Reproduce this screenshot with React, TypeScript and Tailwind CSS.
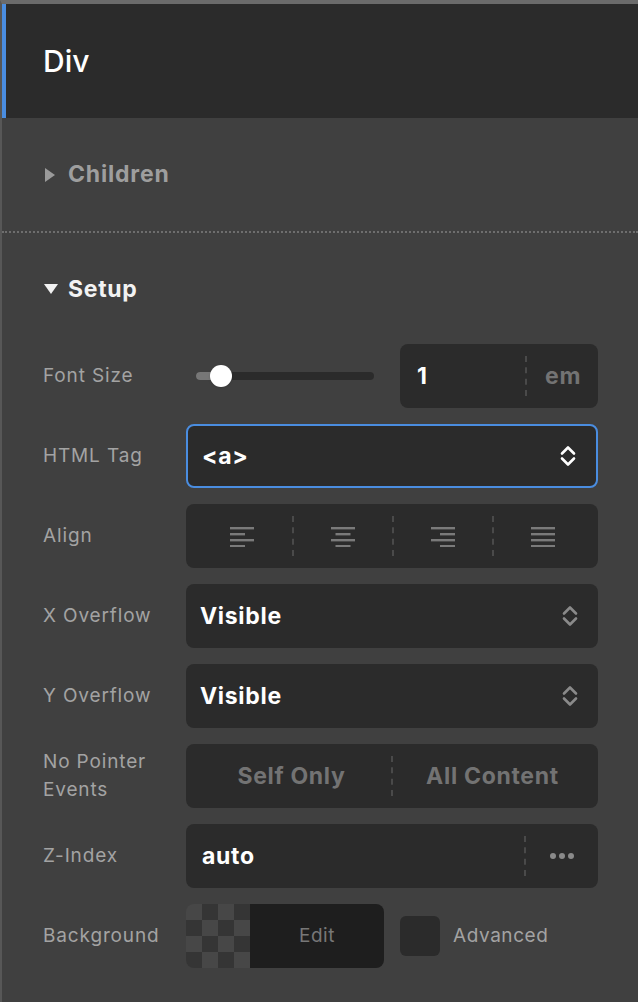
import type { ReactNode } from 'react'

const font = { fontFamily: 'Inter, "Noto Sans", sans-serif' }

function Chevrons({ color }: { color: string }) {
  return (
    <svg width="18" height="22" viewBox="0 0 18 22" fill="none" stroke={color} strokeWidth="2.6" strokeLinecap="round" strokeLinejoin="round">
      <path d="M3 8.5 L9 2.5 L15 8.5" />
      <path d="M3 13.5 L9 19.5 L15 13.5" />
    </svg>
  )
}

function AlignIcon({ kind }: { kind: 'left' | 'center' | 'right' | 'justify' }) {
  const short = kind === 'justify' ? 24 : 15
  const x = kind === 'left' || kind === 'justify' ? 0 : kind === 'center' ? 4.5 : 9
  return (
    <svg width="24" height="22" viewBox="0 0 24 22" fill="#7a7a7a">
      <rect x="0" y="2" width="24" height="2.4" />
      <rect x={x} y="8" width={short} height="2.4" />
      <rect x="0" y="14" width="24" height="2.4" />
      <rect x={x} y="20" width={short} height="2.4" />
    </svg>
  )
}

function VDash({ h = 'h-10' }: { h?: string }) {
  return <div className={`${h} border-l-2 border-dashed border-[#4a4a4a]`} />
}

function Row({ label, children }: { label: ReactNode; children: ReactNode }) {
  return (
    <div className="flex h-16 items-center">
      <div className="w-[143px] shrink-0 text-[19px] leading-[28px] tracking-[0.045em] text-[#a3a3a3]">{label}</div>
      <div className="flex h-full flex-1 items-center">{children}</div>
    </div>
  )
}

function Select({ value, focused }: { value: string; focused?: boolean }) {
  return (
    <div
      className={`flex h-full w-full items-center justify-between rounded-lg bg-[#2b2b2b] pl-[14px] pr-[19px] ${
        focused ? 'border-2 border-[#4a8de0]' : ''
      }`}
    >
      <span className="text-[23px] font-bold tracking-[0.03em] text-white">{value}</span>
      <Chevrons color={focused ? '#ffffff' : '#8a8a8a'} />
    </div>
  )
}

export default function App() {
  const checker = Array.from({ length: 16 }, (_, i) => ((Math.floor(i / 4) + i) % 2 === 0 ? 'bg-[#474747]' : 'bg-[#353535]'))

  return (
    <div className="min-h-[1002px] w-[638px] border-t-4 border-l-2 border-t-[#6b6b6b] border-l-[#575757] bg-[#404040]" style={font}>
      {/* header */}
      <div className="flex h-[114px] items-center border-l-4 border-[#4a8de0] bg-[#2b2b2b] pl-[37px]">
        <span className="text-[30px] font-medium text-white">Div</span>
      </div>

      {/* Children */}
      <div className="flex h-[113px] items-center gap-[13px] pl-[43px]">
        <svg width="10" height="14" viewBox="0 0 10 14" fill="#9a9a9a">
          <path d="M0 0 L10 7 L0 14 Z" />
        </svg>
        <span className="text-[23px] font-bold tracking-[0.035em] text-[#9e9e9e]">Children</span>
      </div>
      <div className="border-t-2 border-dotted border-[#6e6e6e]" />

      {/* Setup */}
      <div className="pl-[41px] pr-10 pt-[42px]">
        <div className="flex h-7 items-center gap-[10px] pl-[1px]">
          <svg width="14" height="10" viewBox="0 0 14 10" fill="#f2f2f2">
            <path d="M0 0 L14 0 L7 10 Z" />
          </svg>
          <span className="text-[23px] font-bold tracking-[0.03em] text-[#f2f2f2]">Setup</span>
        </div>

        <div className="mt-[41px] flex flex-col gap-4">
          <Row label="Font Size">
            <div className="relative flex h-full w-[214px] items-center pl-[10px] pr-[26px]">
              <div className="relative h-2 w-full rounded-sm bg-[#2b2b2b]">
                <div className="h-full w-[22px] rounded-l-sm bg-[#777777]" />
                <div className="absolute left-[14px] top-1/2 h-[22px] w-[22px] -translate-y-1/2 rounded-full bg-white shadow" />
              </div>
            </div>
            <div className="flex h-full flex-1 items-center rounded-lg bg-[#2b2b2b]">
              <span className="w-[125px] pl-[17px] text-[23px] font-bold text-white">1</span>
              <VDash />
              <span className="flex-1 pl-[18px] text-[23px] font-bold tracking-[0.03em] text-[#737373]">em</span>
            </div>
          </Row>

          <Row label="HTML Tag">
            <Select value="<a>" focused />
          </Row>

          <Row label="Align">
            <div className="flex h-full w-full items-center rounded-lg bg-[#2b2b2b] px-[6px]">
              {(['left', 'center', 'right', 'justify'] as const).map((k, i) => (
                <div key={k} className="flex h-full flex-1 items-center">
                  {i > 0 && <VDash />}
                  <div className="flex flex-1 justify-center">
                    <AlignIcon kind={k} />
                  </div>
                </div>
              ))}
            </div>
          </Row>

          <Row label="X Overflow">
            <Select value="Visible" />
          </Row>

          <Row label="Y Overflow">
            <Select value="Visible" />
          </Row>

          <Row
            label={
              <>
                No Pointer
                <br />
                Events
              </>
            }
          >
            <div className="flex h-full w-full items-center rounded-lg bg-[#2b2b2b] px-[6px]">
              <div className="flex flex-1 justify-center text-[23px] font-bold tracking-[0.03em] text-[#737373]">Self Only</div>
              <VDash />
              <div className="flex flex-1 justify-center text-[23px] font-bold tracking-[0.03em] text-[#737373]">All Content</div>
            </div>
          </Row>

          <Row label="Z-Index">
            <div className="flex h-full w-full items-center rounded-lg bg-[#2b2b2b]">
              <span className="w-[338px] pl-[16px] text-[23px] font-bold tracking-[0.03em] text-white">auto</span>
              <VDash />
              <div className="flex flex-1 justify-center gap-[3px]">
                <span className="h-[6px] w-[6px] rounded-full bg-[#8a8a8a]" />
                <span className="h-[6px] w-[6px] rounded-full bg-[#8a8a8a]" />
                <span className="h-[6px] w-[6px] rounded-full bg-[#8a8a8a]" />
              </div>
            </div>
          </Row>

          <Row label="Background">
            <div className="flex h-full w-[198px] overflow-hidden rounded-lg">
              <div className="grid h-16 w-16 shrink-0 grid-cols-4">
                {checker.map((c, i) => (
                  <div key={i} className={c} />
                ))}
              </div>
              <div className="flex flex-1 items-center justify-center bg-[#1e1e1e] text-[19px] tracking-[0.03em] text-[#777777]">Edit</div>
            </div>
            <div className="ml-4 h-10 w-10 rounded-md bg-[#2b2b2b]" />
            <span className="ml-[13px] text-[19px] tracking-[0.03em] text-[#a3a3a3]">Advanced</span>
          </Row>
        </div>
      </div>
    </div>
  )
}
